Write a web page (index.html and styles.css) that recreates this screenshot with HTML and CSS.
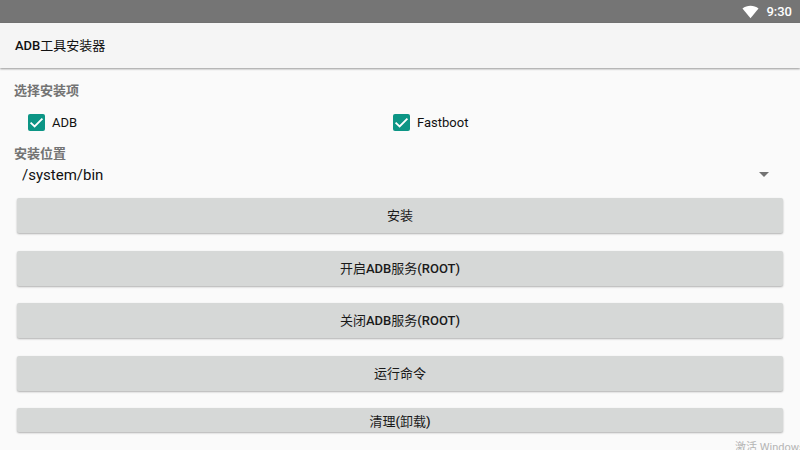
FILE: index.html
```html
<!DOCTYPE html>
<html lang="zh-CN">
<head>
    <meta charset="UTF-8">
    <meta name="viewport" content="width=device-width, initial-scale=1.0">
    <title>ADB工具安装器</title>
    <link rel="stylesheet" href="styles.css">
</head>
<body>
    <div class="status-bar">
        <svg class="wifi" viewBox="0 0 18 14" aria-hidden="true">
            <path d="M9 13.5 0.5 3.2C5.2-0.4 12.8-0.4 17.5 3.2Z"/>
        </svg>
        <span>9:30</span>
    </div>

    <header class="app-bar">
        <h1><span class="latin">ADB</span>工具安装器</h1>
    </header>

    <form class="installer">
        <h2 class="section-title">选择安装项</h2>
        <div class="options">
            <label class="option"><input type="checkbox" name="adb" checked>ADB</label>
            <label class="option"><input type="checkbox" name="fastboot" checked>Fastboot</label>
        </div>

        <label class="section-title" for="location">安装位置</label>
        <div class="location">
            <select id="location" name="location">
                <option>/system/bin</option>
            </select>
            <svg class="arrow" viewBox="0 0 10 5" aria-hidden="true"><path d="M0 0H10L5 5Z"/></svg>
        </div>

        <div class="actions">
            <button type="button">安装</button>
            <button type="button">开启<span class="latin">ADB</span>服务<span class="latin">(ROOT)</span></button>
            <button type="button">关闭<span class="latin">ADB</span>服务<span class="latin">(ROOT)</span></button>
            <button type="button">运行命令</button>
            <button type="button" class="short">清理<span class="latin">(</span>卸载<span class="latin">)</span></button>
        </div>
    </form>

    <div class="watermark">激活 Windows</div>
</body>
</html>
```

FILE: styles.css
```css
* {
    box-sizing: border-box;
}
body {
    position: relative;
    display: flex;
    flex-direction: column;
    min-height: 100vh;
    margin: 0;
    overflow: hidden;
    background-color: #fafafa;
    color: #111;
    font-family: Roboto, "Noto Sans CJK SC", sans-serif;
    font-size: 13px;
    line-height: 20px;
}
.latin {
    font-weight: 500;
}
.status-bar {
    display: flex;
    align-items: center;
    justify-content: flex-end;
    gap: 7px;
    height: 23px;
    padding: 0 8px;
    background-color: #757575;
    color: #fff;
    font-weight: 500;
}
.wifi {
    width: 17px;
    height: 14px;
    fill: #fff;
}
.app-bar {
    display: flex;
    align-items: center;
    height: 45px;
    padding: 0 15px;
    background-color: #f5f5f5;
    box-shadow: 0 1px 2px rgba(0, 0, 0, 0.4);
}
h1 {
    margin: 0;
    font-size: 13px;
    font-weight: 400;
}
.installer {
    display: flex;
    flex: 1;
    flex-direction: column;
    padding: 13px 14px 18px;
}
.section-title {
    margin: 0;
    color: #737373;
    font-size: 13px;
    font-weight: bold;
}
.options {
    display: grid;
    grid-template-columns: 1fr 1fr;
    height: 43px;
    padding: 0 28px 0 14px;
}
.option {
    display: flex;
    align-items: center;
    gap: 7px;
}
.option input {
    appearance: none;
    width: 17px;
    height: 17px;
    margin: 0;
    border-radius: 2px;
    background: #0c9585 url("data:image/svg+xml,%3Csvg xmlns='http://www.w3.org/2000/svg' viewBox='0 0 17 17'%3E%3Cpath d='M2.6 8.6 6.6 12.5 14.4 4.6' fill='none' stroke='white' stroke-width='1.8'/%3E%3C/svg%3E");
}
.option input:not(:checked) {
    border: 2px solid #737373;
    background: none;
}
.location {
    display: grid;
    align-items: center;
}
.location select,
.arrow {
    grid-area: 1 / 1;
}
.location select {
    appearance: none;
    width: 100%;
    height: 21px;
    padding: 0 8px;
    border: none;
    background: none;
    color: #111;
    font-family: inherit;
    font-size: 15px;
}
.arrow {
    justify-self: end;
    width: 10px;
    height: 5px;
    margin-right: 17px;
    fill: #737373;
    pointer-events: none;
}
.actions {
    display: flex;
    flex: 1;
    flex-direction: column;
    justify-content: space-between;
    gap: 12px;
    padding: 13px 3px 0;
}
.actions button {
    height: 35px;
    padding: 0 0 2px;
    border: none;
    border-radius: 2px;
    background-color: #d6d8d7;
    box-shadow: 0 1px 2px rgba(0, 0, 0, 0.3);
    color: #1a1a1a;
    font-family: inherit;
    font-size: 13px;
    cursor: pointer;
}
.actions button:active {
    background-color: #c4c6c5;
}
.actions .short {
    height: 24px;
    padding: 0;
}
.watermark {
    position: absolute;
    top: 100%;
    left: 100%;
    margin: -12px 0 0 -65px;
    color: #b5b5b5;
    font-size: 11px;
    white-space: nowrap;
    pointer-events: none;
}
```
